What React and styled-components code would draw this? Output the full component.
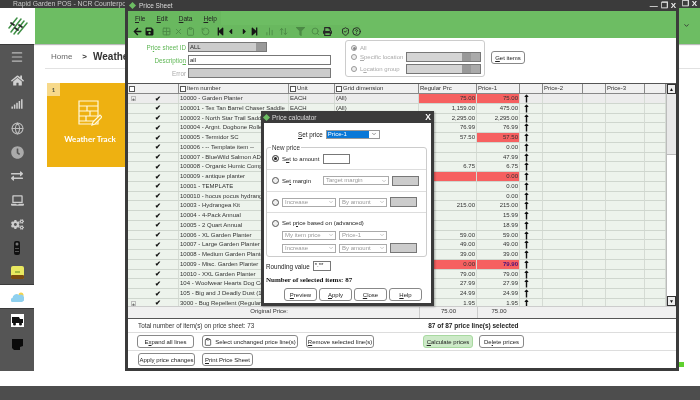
import React from 'react';
import styled, { createGlobalStyle } from 'styled-components';
import { Grid2x2, X as XIcon, Clipboard, RotateCcw, BarChart2, ArrowUpDown, Search, HelpCircle, ChevronDown, Menu, Globe, ShieldCheck } from 'lucide-react';
import { FaArrowLeft, FaSave, FaStepBackward, FaCaretLeft, FaCaretRight, FaStepForward, FaFilter, FaPrint, FaHome, FaClock, FaExchangeAlt, FaLaptop, FaCogs, FaSignal, FaLongArrowAltUp } from 'react-icons/fa';

const Global = createGlobalStyle`
  html, body { margin: 0; padding: 0; background: #fff; }
  #root { width: 700px; height: 400px; overflow: hidden; font-family: "Liberation Sans", Arial, sans-serif; }
`;
const Page = styled.div`position: relative; width: 700px; height: 400px; background: #fff; display: flex; flex-direction: column; overflow: hidden; filter: blur(0.3px);`;
const TopTitle = styled.div`height: 8px; background: #3d3d3d; color: #c9c9c9; font-size: 6.8px; line-height: 7px; padding-left: 13px; overflow: hidden; white-space: nowrap; flex: none;`;
const Header = styled.div`height: 36px; flex: none; display: flex; background: #6dbd63; box-shadow: 0 1px 1px #bbb;`;
const Logo = styled.div`width: 35px; background: #fff; display: flex; align-items: center; justify-content: center;`;
const Body = styled.div`flex: 1; display: flex; min-height: 0;`;
const Side = styled.div`width: 34px; background: #555; display: flex; flex-direction: column; align-items: center; color: #ccc;`;
const SideItem = styled.div`width: 100%; height: ${p => p.$h || 24}px; flex: none; display: flex; align-items: center; justify-content: center; background: ${p => p.$active ? '#fff' : 'transparent'}; border-top: ${p => p.$line ? '1px solid #3a3a3a' : 'none'}; box-sizing: border-box;`;
const Content = styled.div`flex: 1; padding: 0 0 0 13px;`;
const Crumb = styled.div`height: 25px; display: flex; align-items: center; gap: 6px; font-size: 8px; color: #666; border-bottom: 1px solid #e2e2e2; padding-left: 6px; margin-left: -2px; box-sizing: border-box;`;
const CrumbHome = styled.span`margin-right: 4px;`;
const CrumbArrow = styled.b`color: #333;`;
const CrumbStrong = styled.b`font-size: 10px; color: #333;`;
const Tile = styled.div`position: relative; width: 86px; height: 84px; margin-top: 14px; background: #eeb111; color: #fff; display: flex; flex-direction: column; align-items: center; padding-top: 17px; box-sizing: border-box; font: bold 8px Lato, sans-serif;`;
const TileNo = styled.div`position: absolute; left: 0; top: 0; width: 13px; height: 13px; background: #f7d98a; color: #554; font-size: 6px; display: flex; align-items: center; justify-content: center;`;
const TileLabel = styled.div`margin-top: 8px;`;
const Footer = styled.div`height: 14px; flex: none; background: #4d4d4d; margin-top: 15px;`;
const Dot = styled.div`position: absolute; left: 679px; top: 362px; width: 5px; height: 5px; background: #5fd12f;`;
const OuterX = styled.div`position: absolute; top: 0; right: 3px; height: 7px; color: #eee; font-size: 8px; font-weight: bold; display: flex; gap: 3px; align-items: center;`;
const Chevron = styled.div`position: absolute; left: 683px; top: 22px; color: #333; display: flex;`;

const Win = styled.div`position: absolute; left: 125px; top: 0; width: 554px; height: 371px; box-sizing: border-box; border: 3px solid #3b3b3b; border-top: 0; background: #fff; display: flex; flex-direction: column;`;
const WinTitle = styled.div`height: 12px; margin: 0 -3px; padding-left: 5px; background: #3b3b3b; color: #ddd; font-size: 6.5px; display: flex; align-items: center; gap: 4px; position: relative;`;
const WinCtl = styled.div`position: absolute; right: 3px; top: 0; height: 10px; display: flex; align-items: center; gap: 3px; color: #eee; font-size: 8px; font-weight: bold;`;
const Diamond = styled.span`width: 5px; height: 5px; background: #6dbd63; transform: rotate(45deg); display: inline-block; flex: none;`;
const Green = styled.div`height: 27px; flex: none; background: #6dbd63; display: flex; flex-direction: column;`;
const MenuBar = styled.div`height: 14px; display: flex; align-items: center; gap: 11px; width: 86px; padding-left: 7px; background: #69b85f; font-size: 6.5px; color: #222;`;
const ToolBar = styled.div`height: 13px; display: flex; align-items: center; width: 228px; padding-left: 4px; background: #69b85f;`;
const Slot = styled.span`width: 10px; height: 10px; flex: none; margin-left: ${p => p.$ml}px; display: flex; align-items: center; justify-content: center; color: ${p => p.$c};`;
const FormArea = styled.div`height: 45px; flex: none; display: flex; padding: 2px 0 0 0; box-sizing: border-box;`;
const FormCol = styled.div`width: 217px; flex: none; display: flex; flex-direction: column; gap: 3px; padding-top: 2px;`;
const FormRow = styled.div`display: flex; align-items: center; height: 10px; gap: 2px;`;
const FormLabel = styled.div`width: 58px; text-align: right; font-size: 6.3px; color: ${p => p.$c || '#5fb755'};`;
const Field = styled.div`width: ${p => p.$w || 143}px; height: 10px; box-sizing: border-box; border: 1px solid #777; background: ${p => p.$bg || '#fff'}; font-size: 6px; line-height: 8px; padding-left: 1px; color: #222; display: flex; justify-content: space-between;`;
const GrayEnd = styled.span`width: ${p => p.$w || 10}px; height: 100%; background: #999; flex: none; display: block;`;
const Group = styled.div`width: 140px; height: 37px; flex: none; box-sizing: border-box; border: 1px solid #ccc; border-radius: 3px; padding: 4px 3px 0 5px; display: flex; flex-direction: column;`;
const GroupRow = styled.div`display: flex; align-items: center; height: ${p => p.$h || 12}px; font-size: 6px; color: #aaa; gap: 3px;`;
const Radio = styled.span`width: ${p => p.$s || 6}px; height: ${p => p.$s || 6}px; box-sizing: border-box; border: 1px solid ${p => p.$c || '#999'}; border-radius: 50%; background: #eee; flex: none; display: flex; align-items: center; justify-content: center;`;
const RadioDot = styled.span`width: 3px; height: 3px; border-radius: 50%; background: ${p => p.$c || '#888'};`;
const GroupLabel = styled.span`width: 43px; white-space: nowrap;`;
const GrayBox = styled.div`width: 75px; height: 10px; box-sizing: border-box; border: 1px solid #777; background: linear-gradient(90deg, #d4d4d4 0 75%, #999 75% 87%, #aaa 87%);`;
const Btn = styled.div`height: ${p => p.$h || 13}px; box-sizing: border-box; border: 1px solid ${p => p.$green ? '#a8d9a0' : '#888'}; border-radius: 3px; background: ${p => p.$green ? '#cdeac8' : '#fff'}; display: inline-flex; align-items: center; justify-content: center; gap: 3px; font-size: 6px; color: #222; white-space: nowrap; width: ${p => p.$w}px; flex: none;`;
const GetBtn = styled(Btn)`margin: 11px 0 0 6px;`;

const GridWrap = styled.div`position: relative; height: 222px; flex: none; display: flex; border-top: 1px solid #555; overflow: hidden;`;
const GridMain = styled.div`width: 538px; flex: none; overflow: hidden;`;
const cols = '51px 110px 46px 84px 58px 43px 23px 40px 23px 39px 21px';
const Row = styled.div`display: grid; grid-template-columns: ${cols}; height: 9.75px; box-sizing: border-box; background: ${p => p.$first ? '#ececec' : '#edf3ec'}; border-bottom: 1px solid #cfd6ce;`;
const HeadRow = styled(Row)`height: 10px; background: #f0f0f0; border-bottom: 1px solid #888;`;
const Cell = styled.div`font-size: 6px; line-height: 8.5px; color: ${p => p.$c || '#333'}; padding: 0 1px; border-right: 1px solid #d5dbd4; white-space: nowrap; overflow: hidden; text-align: ${p => p.$r ? 'right' : 'left'}; background: ${p => p.$red ? '#f66060' : 'transparent'}; display: ${p => p.$flex ? 'flex' : 'block'}; align-items: center; ${p => p.$bold ? 'font-weight:bold;' : ''} box-sizing: border-box;`;
const HeadCell = styled(Cell)`border-right: 1px solid #888; display: flex; align-items: center; gap: 1px; font-size: 6px;`;
const HeadBox = styled.span`width: 6px; height: 6px; border: 1px solid #555; background: #fff; display: inline-block; box-sizing: border-box; flex: none;`;
const Expander = styled.span`width: 5px; height: 5px; border: 1px solid #bbb; font-size: 5px; line-height: 4px; text-align: center; margin-left: 2px; flex: none; box-sizing: border-box;`;
const Check = styled.span`margin-left: ${p => p.$x ? 19 : 26}px; font-size: 7px; line-height: 8px; color: #111; font-weight: bold;`;
const Arrow = styled.div`display: flex; justify-content: flex-start; padding-left: 2px; align-items: center; border-right: 1px solid #d5dbd4; color: #111;`;
const Scroll = styled.div`width: 10px; flex: none; border-left: 1px solid #bbb; box-sizing: border-box; background: #fff; display: flex; flex-direction: column;`;
const ScrollBtn = styled.div`height: 10px; background: #eee; border: 1px solid #333; box-sizing: border-box; display: flex; align-items: center; justify-content: center; font-size: 5px; line-height: 5px; color: #111;`;
const Thumb = styled.div`height: 60px; background: #e8e8e8; border-bottom: 1px solid #bbb;`;
const Spacer = styled.div`flex: 1;`;
const Orig = styled.div`height: 12px; flex: none; display: grid; grid-template-columns: ${cols}; background: #f0f0f0; border-top: 1px solid #ccc; box-sizing: border-box; font-size: 6px; color: #333; line-height: 9px;`;
const OrigLabel = styled.div`grid-column: 1 / 5; text-align: right; padding-right: 131px;`;
const OrigVal = styled.div`text-align: center; border-left: 1px solid #ccc;`;
const GridArea = styled.div`position: relative; display: flex; flex-direction: column;`;
const BarRow = styled.div`height: ${p => p.$h}px; flex: none; display: flex; align-items: center; box-sizing: border-box; border-top: ${p => p.$line ? '1px solid #ddd' : '0'}; padding-left: ${p => p.$pl || 0}px; gap: ${p => p.$g || 0}px; font-size: 6.3px; color: #333;`;
const InfoRow = styled(BarRow)`border-top: 1px solid #555; padding-left: 10px;`;
const Count = styled.b`margin-left: 174px; font-size: 6.5px; color: #222;`;
const U = styled.span`text-decoration: underline; text-decoration-thickness: 0.5px;`;
const Gap = styled.div`width: ${p => p.$w}px; flex: none;`;

const Dlg = styled.div`position: absolute; left: 261px; top: 111px; width: 173px; height: 195px; box-sizing: border-box; border: 3px solid #3b3b3b; border-top: 0; background: #fff; display: flex; flex-direction: column; box-shadow: 1px 1px 2px rgba(0,0,0,.3);`;
const DlgTitle = styled.div`height: 12px; flex: none; margin: 0 -3px; padding: 0 3px 0 2px; background: #3b3b3b; color: #ddd; font-size: 6.5px; display: flex; align-items: center; justify-content: space-between;`;
const DlgLeft = styled.div`display: flex; align-items: center; gap: 3px; padding-left: 1px;`;
const DlgX = styled.span`color: #fff; font-size: 8.5px; font-weight: bold;`;
const SetPrice = styled.div`display: flex; align-items: center; gap: 3px; height: 12px; margin-top: 5px; padding-left: 34px; font-size: 6.3px; color: #222; flex: none;`;
const Sel = styled.div`width: 54px; height: 9px; box-sizing: border-box; border: 1px solid #999; display: flex; background: #fff;`;
const SelFill = styled.div`width: 42px; background: #0a78d7; color: #fff; font-size: 6px; line-height: 7px; padding-left: 1px; box-sizing: border-box;`;
const SelArrow = styled.div`flex: 1; display: flex; align-items: center; justify-content: center; color: #333;`;
const Fieldset = styled.div`position: relative; margin: 7px 4px 0 2px; height: 110px; flex: none; box-sizing: border-box; border: 1px solid #ccc; border-radius: 3px; display: flex; flex-direction: column;`;
const Legend = styled.div`position: absolute; left: 4px; top: -4px; background: #fff; font-size: 6.3px; line-height: 7px; padding: 0 1px; color: #333;`;
const Sect = styled.div`height: ${p => p.$h}px; flex: none; box-sizing: border-box; border-top: ${p => p.$line ? '1px solid #ddd' : '0'}; display: flex; flex-direction: column; justify-content: ${p => p.$top ? 'flex-start' : 'center'}; padding: ${p => p.$top ? '6px' : '0'} 0 0 5px; gap: 3px;`;
const DlgRow = styled.div`display: flex; align-items: center; gap: 3px; font-size: 6px; color: #222; padding-left: ${p => p.$pl || 0}px; height: ${p => p.$h || 11}px; white-space: nowrap;`;
const DlgText = styled.span`width: ${p => p.$w}px; flex: none;`;
const DlgSelect = styled.div`width: ${p => p.$w || 54}px; height: 9px; box-sizing: border-box; border: 1px solid #aaa; font-size: 6px; line-height: 7px; color: #999; padding: 0 1px 0 2px; display: flex; justify-content: space-between; align-items: center; flex: none;`;
const DlgGray = styled.div`width: 27px; height: 10px; box-sizing: border-box; border: 1px solid #777; background: #ccc; flex: none;`;
const DlgAmount = styled.div`width: 27px; height: 10px; box-sizing: border-box; border: 1px solid #777; background: #fff; flex: none;`;
const Rounding = styled.div`display: flex; align-items: center; gap: 3px; height: 10px; margin: 4px 0 0 2px; font-size: 6.3px; color: #222; flex: none;`;
const RoundBox = styled.div`width: 18px; height: 10px; box-sizing: border-box; border: 1px solid #777; font-size: 6px; line-height: 6px; padding-left: 1px;`;
const SelCount = styled.div`font: bold 7px "Liberation Serif", serif; color: #111; margin: 5px 0 0 2px; height: 9px; line-height: 9px; flex: none;`;
const DlgBtns = styled.div`display: flex; gap: 2px; padding-left: 20px; margin-top: 3px; flex: none;`;

const rows = [
  ['10000 - Garden Planter', 'EACH', '(All)', '75.00', '75.00', 'rr', true],
  ['100001 - Tex Tan Barrel Chaser Saddle', 'EACH', '(All)', '1,159.00', '475.00'],
  ['100003 - North Star Trail Saddle', 'EACH', '(All)', '2,295.00', '2,295.00'],
  ['100004 - Argnt. Dogbone Roller', 'EACH', '(All)', '76.99', '76.99'],
  ['100005 - Termidor SC', '', '', '57.50', '57.50', 'g'],
  ['100006 - -- Template item --', '', '', '', '0.00'],
  ['100007 - BlueWild Salmon ADU', '', '', '', '47.99'],
  ['100008 - Organic Humic Compo', '', '', '6.75', '6.75'],
  ['100009 - antique planter', '', '', '', '0.00', 'rr'],
  ['10001 - TEMPLATE', '', '', '', '0.00'],
  ['100010 - hocus pocus hydrang', '', '', '', '0.00'],
  ['10003 - Hydrangea Kit', '', '', '215.00', '215.00'],
  ['10004 - 4-Pack Annual', '', '', '', '15.99'],
  ['10005 - 2 Quart Annual', '', '', '', '18.99'],
  ['10006 - XL Garden Planter', '', '', '59.00', '59.00'],
  ['10007 - Large Garden Planter', '', '', '49.00', '49.00'],
  ['10008 - Medium Garden Planter', '', '', '39.00', '39.00'],
  ['10009 - Misc. Garden Planter', '', '', '0.00', '79.90', 'rr', false, true],
  ['10010 - XXL Garden Planter', '', '', '79.00', '79.00'],
  ['104 - Woofwear Hearts Dog Co', '', '', '27.99', '27.99'],
  ['105 - Big and J Deadly Dust (15', '', '', '24.99', '24.99'],
  ['3000 - Bug Repellent (Regular)', '', '', '1.95', '1.95', '', true],
];

const dark = '#161616';
const dim = '#4c8a46';
const tools = [
  [FaArrowLeft, 0, dark], [FaSave, 2, dark],
  [Grid2x2, 7, dim], [XIcon, 2, dim], [Clipboard, 2, dim], [RotateCcw, 5, dim],
  [FaStepBackward, 5, dark], [FaCaretLeft, 0, dark], [FaCaretRight, 4, dark], [FaStepForward, 0, dark],
  [BarChart2, 5, dim], [ArrowUpDown, 4, dim], [FaFilter, 7, dim], [Search, 5, dim],
  [FaPrint, 2, '#2a2a2a'], [ShieldCheck, 8, '#222'], [HelpCircle, 1, '#222'],
];

function GridRow({ r, first }) {
  const [name, unit, dimension, reg, p1, flag, exp, boldP] = r;
  const redReg = flag === 'rr';
  const redP1 = flag === 'rr' || flag === 'g';
  return (
    <Row $first={first}>
      <Cell $flex>
        {exp ? <Expander>+</Expander> : null}
        <Check $x={exp}>✔</Check>
      </Cell>
      <Cell>{name}</Cell>
      <Cell>{unit}</Cell>
      <Cell>{dimension}</Cell>
      <Cell $r $red={redReg}>{reg}</Cell>
      <Cell $r $red={redP1} $c={boldP ? '#4a0f7a' : undefined} $bold={boldP}>{p1}</Cell>
      <Arrow><FaLongArrowAltUp size={9} /></Arrow>
      <Cell /><Cell /><Cell /><Cell />
    </Row>
  );
}

export default function App() {
  return (
    <Page>
      <Global />
      <TopTitle>Rapid Garden POS - NCR Counterpoint</TopTitle>
      <Header>
        <Logo>
          <svg width="20" height="18" viewBox="0 0 20 18" fill="none" stroke="#3f8f45" strokeWidth="1.5" strokeLinecap="round">
            <path d="M1 11 L9 1M3 15 L13 2M6 17 L16 4M10 17 L19 6" />
            <path d="M3 6 L6 8M7 11l3 2M11 8l3 2" stroke="#2b2b2b" strokeWidth="1.8" />
          </svg>
        </Logo>
      </Header>
      <Body>
        <Side>
          <SideItem $h={24} $line><Menu size={14} color="#bbb" /></SideItem>
          <SideItem><FaHome size={13} color="#d0d0d0" /></SideItem>
          <SideItem><FaSignal size={12} color="#d0d0d0" /></SideItem>
          <SideItem><Globe size={13} color="#bbb" /></SideItem>
          <SideItem><FaClock size={13} color="#aaa" /></SideItem>
          <SideItem><FaExchangeAlt size={12} color="#ccc" /></SideItem>
          <SideItem><FaLaptop size={13} color="#ccc" /></SideItem>
          <SideItem><FaCogs size={13} color="#ccc" /></SideItem>
          <SideItem>
            <svg width="8" height="14" viewBox="0 0 8 14"><rect x="1" y="0" width="6" height="14" rx="2" fill="#111" /><circle cx="4" cy="3" r="1.5" fill="#777" /><rect x="2" y="7" width="4" height="1" fill="#555" /><rect x="2" y="10" width="4" height="1" fill="#555" /></svg>
          </SideItem>
          <SideItem>
            <svg width="13" height="13" viewBox="0 0 13 13"><rect width="13" height="13" rx="2" fill="#e9e860" /><rect y="9" width="13" height="4" rx="1" fill="#7a4a10" /><path d="M4 6h5" stroke="#5a8a20" strokeWidth="1" /></svg>
          </SideItem>
          <SideItem $h={24} $active $line>
            <svg width="13" height="10" viewBox="0 0 13 10"><circle cx="10" cy="3" r="2.5" fill="#f4d24a" /><path d="M2 10a2 2 0 0 1-.5-4A4 4 0 0 1 8 3a3 3 0 0 1 3 7z" fill="#8fd0ee" /></svg>
          </SideItem>
          <SideItem $h={24} $line>
            <svg width="13" height="13" viewBox="0 0 13 13"><rect width="13" height="13" fill="#fff" /><path d="M1 3h7l1 2h3v4H1z" fill="#111" /><circle cx="3.5" cy="10" r="1.5" fill="#111" /><circle cx="9.5" cy="10" r="1.5" fill="#111" /></svg>
          </SideItem>
          <SideItem>
            <svg width="11" height="11" viewBox="0 0 11 11"><path d="M0 0h11v7l-3 1v3H2L0 9z" fill="#0a0a0a" /></svg>
          </SideItem>
          <Spacer />
        </Side>
        <Content>
          <Crumb><CrumbHome>Home</CrumbHome><CrumbArrow>&gt;</CrumbArrow><CrumbStrong>Weather</CrumbStrong></Crumb>
          <Tile>
            <TileNo>1</TileNo>
            <svg width="24" height="26" viewBox="0 0 24 26" fill="none" stroke="#fff8dc" strokeWidth="1.2">
              <path d="M1 1h19v23H1zM1 6h19M1 11h19M1 16h19M1 21h19M9 6v5M12 11v5M8 16v5" />
              <path d="M15 22l7-7 2 2-7 7-3 1z" fill="#eeb111" />
            </svg>
            <TileLabel>Weather Track</TileLabel>
          </Tile>
        </Content>
      </Body>
      <Footer />
      <OuterX><span>❐</span><span>X</span></OuterX>
      <Chevron><ChevronDown size={7} strokeWidth={3} /></Chevron>
      <Dot />

      <Win>
        <WinTitle>
          <Diamond /><span>Price Sheet</span>
          <WinCtl><span>—</span><span>❐</span><span>X</span></WinCtl>
        </WinTitle>
        <Green>
          <MenuBar><span><U>F</U>ile</span><span><U>E</U>dit</span><span><U>D</U>ata</span><span><U>H</U>elp</span></MenuBar>
          <ToolBar>
            {tools.map(([I, ml, c], i) => <Slot key={i} $ml={ml} $c={c}><I size={9} strokeWidth={2.4} /></Slot>)}
          </ToolBar>
        </Green>
        <FormArea>
          <FormCol>
            <FormRow>
              <FormLabel><span>Pr<U>i</U>ce sheet ID</span></FormLabel>
              <Field $w={79} $bg="#ccc">ALL<GrayEnd /></Field>
            </FormRow>
            <FormRow>
              <FormLabel><span>Descriptio<U>n</U></span></FormLabel>
              <Field>all</Field>
            </FormRow>
            <FormRow>
              <FormLabel $c="#aaa">Error</FormLabel>
              <Field $bg="#ccc" />
            </FormRow>
          </FormCol>
          <Group>
            <GroupRow $h={6}><Radio><RadioDot /></Radio><span>All</span></GroupRow>
            <GroupRow><Radio /><GroupLabel><U>S</U>pecific location</GroupLabel><GrayBox /></GroupRow>
            <GroupRow><Radio /><GroupLabel>L<U>o</U>cation group</GroupLabel><GrayBox /></GroupRow>
          </Group>
          <GetBtn $w={34}><span><U>G</U>et items</span></GetBtn>
        </FormArea>
        <GridArea>
          <GridWrap>
            <GridMain>
              <HeadRow>
                <HeadCell><HeadBox /></HeadCell>
                <HeadCell><HeadBox />Item number</HeadCell>
                <HeadCell><HeadBox />Unit</HeadCell>
                <HeadCell><HeadBox />Grid dimension</HeadCell>
                <HeadCell>Regular Prc</HeadCell>
                <HeadCell>Price-1</HeadCell>
                <HeadCell />
                <HeadCell>Price-2</HeadCell>
                <HeadCell />
                <HeadCell>Price-3</HeadCell>
                <HeadCell />
              </HeadRow>
              {rows.map((r, i) => <GridRow key={i} r={r} first={i === 0} />)}
            </GridMain>
            <Scroll>
              <ScrollBtn>▲</ScrollBtn>
              <Thumb />
              <Spacer />
              <ScrollBtn>▼</ScrollBtn>
            </Scroll>
          </GridWrap>
          <Orig>
            <OrigLabel>Original Price:</OrigLabel>
            <OrigVal>75.00</OrigVal>
            <OrigVal>75.00</OrigVal>
          </Orig>
        </GridArea>
        <InfoRow $h={14}><span>Total number of item(s) on price sheet: 73</span><Count>87 of 87 price line(s) selected</Count></InfoRow>
        <BarRow $h={18} $line $pl={9}>
          <Btn $w={57}><span>E<U>x</U>pand all lines</span></Btn>
          <Gap $w={8} />
          <Btn $w={96}><Clipboard size={8} /><span>Select unchanged price line(s)</span></Btn>
          <Gap $w={8} />
          <Btn $w={68}><span><U>R</U>emove selected line(s)</span></Btn>
          <Gap $w={49} />
          <Btn $w={50} $green><span><U>C</U>alculate prices</span></Btn>
          <Gap $w={6} />
          <Btn $w={45}><span>De<U>l</U>ete prices</span></Btn>
        </BarRow>
        <BarRow $h={18} $line $pl={10} $g={7}>
          <Btn $w={57}><span>Appl<U>y</U> price changes</span></Btn>
          <Btn $w={51}><span><U>P</U>rint Price Sheet</span></Btn>
        </BarRow>
      </Win>

      <Dlg>
        <DlgTitle><DlgLeft><Diamond /><span>Price calculator</span></DlgLeft><DlgX>X</DlgX></DlgTitle>
        <SetPrice>
          <span><U>S</U>et price</span>
          <Sel><SelFill>Price-1</SelFill><SelArrow><ChevronDown size={6} /></SelArrow></Sel>
        </SetPrice>
        <Fieldset>
          <Legend>New price</Legend>
          <Sect $h={21}>
            <DlgRow><Radio $s={7} $c="#333"><RadioDot $c="#222" /></Radio><DlgText $w={38}>S<U>e</U>t to amount</DlgText><DlgAmount /></DlgRow>
          </Sect>
          <Sect $h={22} $line>
            <DlgRow><Radio $s={7} $c="#555" /><DlgText $w={38}>Se<U>t</U> margin</DlgText><DlgSelect $w={66}>Target margin<ChevronDown size={6} /></DlgSelect><DlgGray /></DlgRow>
          </Sect>
          <Sect $h={21} $line>
            <DlgRow><Radio $s={7} $c="#555" /><DlgSelect>Increase<ChevronDown size={6} /></DlgSelect><DlgSelect $w={48}>By amount<ChevronDown size={6} /></DlgSelect><DlgGray /></DlgRow>
          </Sect>
          <Sect $h={44} $line $top>
            <DlgRow $h={8}><Radio $s={7} $c="#555" /><span>Set p<U>r</U>ice based on (advanced)</span></DlgRow>
            <DlgRow $h={10} $pl={10}><DlgSelect>My item price<ChevronDown size={6} /></DlgSelect><DlgSelect $w={48}>Price-1<ChevronDown size={6} /></DlgSelect></DlgRow>
            <DlgRow $h={10} $pl={10}><DlgSelect>Increase<ChevronDown size={6} /></DlgSelect><DlgSelect $w={48}>By amount<ChevronDown size={6} /></DlgSelect><DlgGray /></DlgRow>
          </Sect>
        </Fieldset>
        <Rounding><span>Rounding value</span><RoundBox>*.**</RoundBox></Rounding>
        <SelCount>Number of selected items: 87</SelCount>
        <DlgBtns>
          <Btn $w={33}><span><U>P</U>review</span></Btn>
          <Btn $w={33}><span><U>A</U>pply</span></Btn>
          <Btn $w={33}><span><U>C</U>lose</span></Btn>
          <Btn $w={33}><span><U>H</U>elp</span></Btn>
        </DlgBtns>
      </Dlg>
    </Page>
  );
}
